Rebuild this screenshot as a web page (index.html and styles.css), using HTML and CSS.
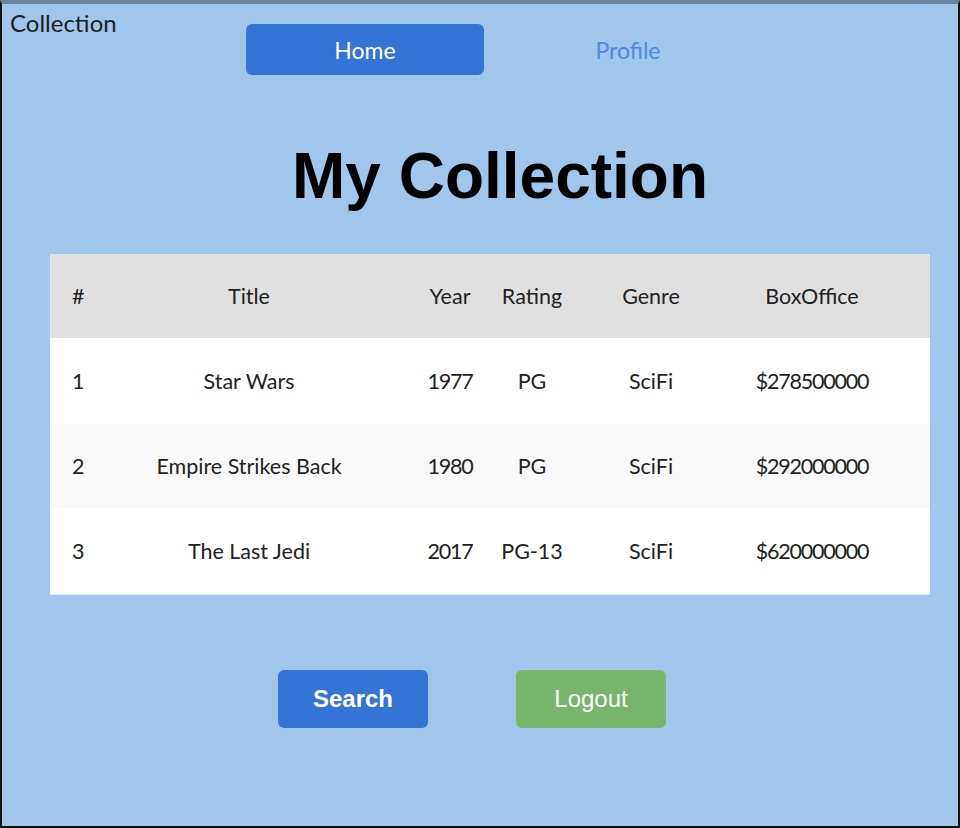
FILE: index.html
```html
<!DOCTYPE html>
<html lang="en">
<head>
<meta charset="utf-8">
<title>Collection</title>
<link rel="stylesheet" href="styles.css">
</head>
<body>
<div class="frame">
  <header class="topbar">
    <div class="brand">Collection</div>
    <nav class="nav">
      <a class="nav-item active" href="#">Home</a>
      <a class="nav-item" href="#">Profile</a>
    </nav>
  </header>

  <h1 class="title">My Collection</h1>

  <div class="table">
    <div class="row head">
      <div class="cell first">#</div>
      <div class="cell">Title</div>
      <div class="cell">Year</div>
      <div class="cell">Rating</div>
      <div class="cell">Genre</div>
      <div class="cell">BoxOffice</div>
    </div>
    <div class="row">
      <div class="cell first">1</div>
      <div class="cell">Star Wars</div>
      <div class="cell num">1977</div>
      <div class="cell">PG</div>
      <div class="cell">SciFi</div>
      <div class="cell num">$278500000</div>
    </div>
    <div class="row alt">
      <div class="cell first">2</div>
      <div class="cell">Empire Strikes Back</div>
      <div class="cell num">1980</div>
      <div class="cell">PG</div>
      <div class="cell">SciFi</div>
      <div class="cell num">$292000000</div>
    </div>
    <div class="row">
      <div class="cell first">3</div>
      <div class="cell">The Last Jedi</div>
      <div class="cell num">2017</div>
      <div class="cell">PG-13</div>
      <div class="cell">SciFi</div>
      <div class="cell num">$620000000</div>
    </div>
  </div>

  <div class="actions">
    <button class="btn btn-search" type="button">Search</button>
    <button class="btn btn-logout" type="button">Logout</button>
  </div>
</div>
</body>
</html>
```

FILE: styles.css
```css
* { box-sizing: border-box; }

html, body {
  margin: 0;
  padding: 0;
}

body {
  font-family: Lato, "Noto Sans", sans-serif;
  color: #222;
}

.frame {
  width: 960px;
  height: 828px;
  background: #a0c6eb;
  border-top: 4px solid #6d839d;
  border-left: 2px solid #111;
  border-right: 2px solid #111;
  border-bottom: 2px solid #111;
  overflow: hidden;
}

.topbar {
  display: flex;
  align-items: flex-start;
  padding-top: 20px;
}

.brand {
  width: 244px;
  padding-left: 8px;
  margin-top: -15px;
  font-size: 24px;
  line-height: 28px;
  color: #1e1e1e;
}

.nav {
  display: flex;
  gap: 25px;
}

.nav-item {
  display: flex;
  align-items: center;
  justify-content: center;
  width: 238px;
  height: 51px;
  border-radius: 6px;
  font-size: 23px;
  color: #4a8ce0;
  text-decoration: none;
}

.nav-item.active {
  background: #3474d4;
  color: #fff;
}

.title {
  margin: 64px 0 41px;
  padding-left: 40px;
  text-align: center;
  font-family: "Liberation Sans", Arial, sans-serif;
  font-weight: bold;
  font-size: 64px;
  line-height: 74px;
  color: #000;
}

.table {
  margin-left: 48px;
  width: 880px;
  background: #fff;
  border-bottom: 1px solid #e4eef8;
}

.row {
  display: grid;
  grid-template-columns: 39px 320px 82px 82px 156px 166px;
  padding-right: 35px;
  height: 86px;
  align-items: center;
  background: #fff;
  font-size: 21.5px;
  color: #222;
}

.row.head {
  height: 84px;
  background: #e0e0e0;
}

.row.alt {
  height: 84px;
  background: #f9f9f9;
}

.cell {
  text-align: center;
  white-space: nowrap;
}

.cell.num {
  letter-spacing: -1.2px;
}

.cell.first {
  text-align: left;
  padding-left: 22px;
}

.actions {
  display: flex;
  justify-content: center;
  gap: 88px;
  padding-right: 16px;
  margin-top: 75px;
}

.btn {
  width: 150px;
  height: 58px;
  border: none;
  border-radius: 6px;
  font-family: "Liberation Sans", Arial, sans-serif;
  font-size: 24px;
  color: #fff;
  cursor: pointer;
}

.btn-search {
  background: #3474d4;
  font-weight: bold;
}

.btn-logout {
  background: #76b66a;
}
```
